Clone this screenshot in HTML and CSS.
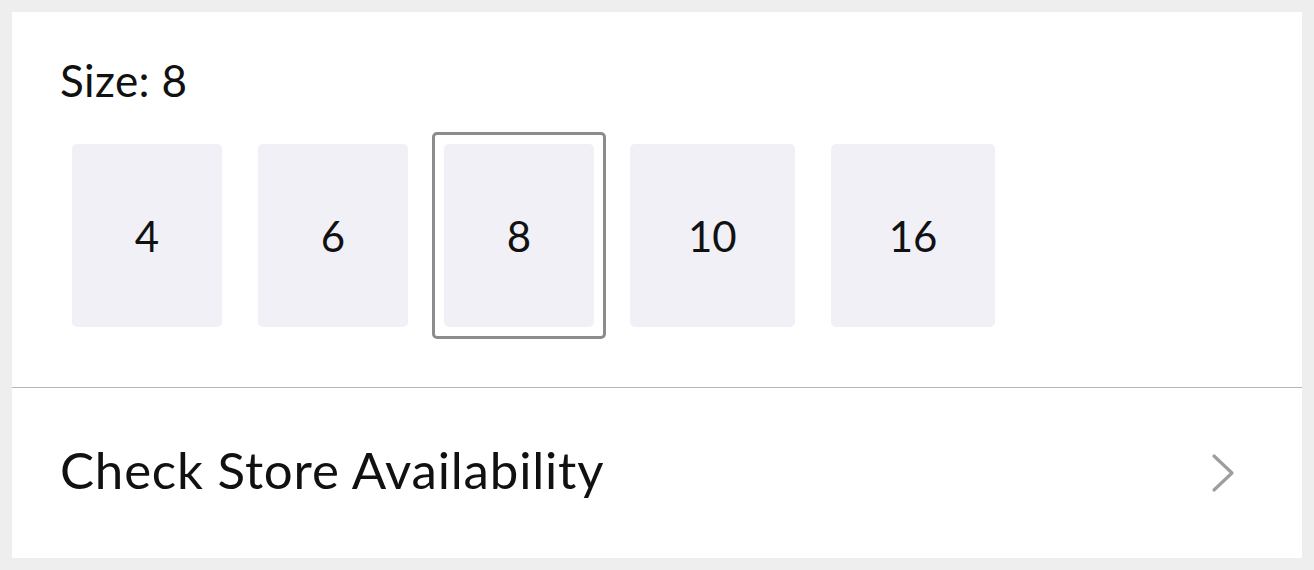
FILE: index.html
```html
<!DOCTYPE html>
<html lang="en">
<head>
  <meta charset="UTF-8">
  <meta name="viewport" content="width=device-width, initial-scale=1.0">
  <title>Size</title>
  <link rel="stylesheet" href="styles.css">
</head>
<body>
  <div class="card">
    <div class="size-section">
      <div class="size-label">Size: 8</div>
      <div class="size-list">
        <div class="size-item"><div class="size-box">4</div></div>
        <div class="size-item"><div class="size-box">6</div></div>
        <div class="size-item selected"><div class="size-box">8</div></div>
        <div class="size-item"><div class="size-box">10</div></div>
        <div class="size-item"><div class="size-box">16</div></div>
      </div>
    </div>
    <div class="store-row">
      <span class="store-title">Check Store Availability</span>
      <svg class="chevron" width="26" height="42" viewBox="0 0 26 42">
        <polyline points="4,4 22,21 4,38" fill="none" stroke="#9e9e9e" stroke-width="3.2" stroke-linecap="round" stroke-linejoin="round"/>
      </svg>
    </div>
  </div>
</body>
</html>
```

FILE: styles.css
```css
body {
  margin: 0;
  padding: 12px;
  background-color: #eeeeee;
  font-family: Lato, "Open Sans", sans-serif;
  color: #111;
}
.card {
  background-color: white;
  height: 546px;
}
.size-section {
  padding: 48px 48px 48px 48px;
}
.size-label {
  font-size: 44px;
  line-height: 40px;
  letter-spacing: 0.4px;
  margin-bottom: 32px;
}
.size-list {
  display: flex;
  gap: 12px;
}
.size-item {
  border: 3px solid transparent;
  border-radius: 5px;
  padding: 9px;
}
.size-item.selected {
  border-color: #8c8c8c;
}
.size-box {
  min-width: 150px;
  height: 183px;
  box-sizing: border-box;
  padding: 0 58px;
  display: flex;
  align-items: center;
  justify-content: center;
  background-color: #f0f0f6;
  border-radius: 5px;
  font-size: 42px;
}
.store-row {
  border-top: 1px solid #b5b5b5;
  height: 170px;
  display: flex;
  align-items: center;
  justify-content: space-between;
  padding: 0 66px 0 48px;
}
.store-title {
  font-size: 51px;
  letter-spacing: 0.8px;
  margin-bottom: 8px;
}
.chevron {
  display: block;
}
```
